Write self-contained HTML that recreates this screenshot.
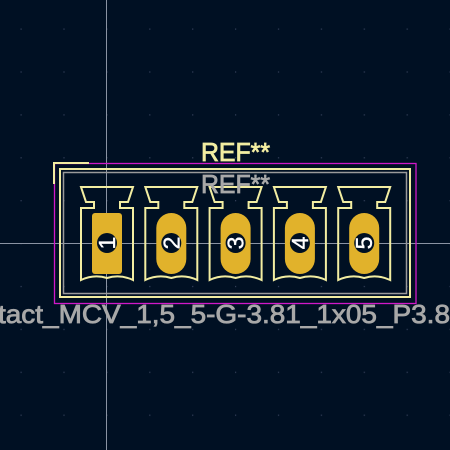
<!DOCTYPE html>
<html><head><meta charset="utf-8"><style>
html,body{margin:0;padding:0;background:#001023;width:450px;height:450px;overflow:hidden}
svg{display:block}
</style></head><body>
<svg width="450" height="450" viewBox="0 0 450 450" xmlns="http://www.w3.org/2000/svg">
<defs>
<pattern id="g" x="0" y="0" width="42.9" height="42.9" patternUnits="userSpaceOnUse" patternTransform="translate(20.5,28.5)">
<rect x="0" y="0" width="1.2" height="1.2" fill="#34405a"/>
</pattern>
<g id="sil">
<path d="M-26,187 L26,187 L21,202 L13,202 L13,208 L26,208 L26,280 Q13,274 0,278 Q-13,274 -26,280 L-26,208 L-13,208 L-13,202 L-21,202 Z" fill="none" stroke="#f2eda1" stroke-width="2" stroke-linejoin="miter"/>
</g>
<g id="pad">
<rect x="-15" y="213" width="30" height="61" rx="15" fill="#e1b22b"/>
<circle cx="0" cy="243" r="10" fill="#001023"/>
</g>
</defs>
<rect width="450" height="450" fill="#001023"/>
<rect width="450" height="450" fill="url(#g)"/>
<line x1="106.5" y1="0" x2="106.5" y2="450" stroke="#8a93a3" stroke-width="1"/>
<line x1="0" y1="243.5" x2="450" y2="243.5" stroke="#8a93a3" stroke-width="1"/>
<rect x="54.5" y="163.5" width="361.5" height="140" fill="none" stroke="#d018c8" stroke-width="1.3"/>
<rect x="60" y="169" width="350" height="128" fill="none" stroke="#f2eda1" stroke-width="2"/>
<rect x="63.5" y="172.5" width="343" height="121" fill="none" stroke="#9a9a9a" stroke-width="1.5"/>
<path d="M54,184 L54,163 L89,163" fill="none" stroke="#f2eda1" stroke-width="2"/>
<g transform="translate(107,0)"><use href="#sil"/><rect x="-15" y="213" width="30" height="61" rx="3" fill="#e1b22b"/><circle cx="0" cy="243" r="10" fill="#001023"/></g>
<g transform="translate(171.3,0)"><use href="#sil"/><use href="#pad"/></g>
<g transform="translate(235.6,0)"><use href="#sil"/><use href="#pad"/></g>
<g transform="translate(299.9,0)"><use href="#sil"/><use href="#pad"/></g>
<g transform="translate(364.2,0)"><use href="#sil"/><use href="#pad"/></g>
<g font-family="Liberation Sans, sans-serif" font-size="23" fill="#ffffff" stroke="#ffffff" stroke-width="0.4" text-anchor="middle">
<text transform="translate(115,243) rotate(-90)">1</text>
<text transform="translate(179.3,243) rotate(-90)">2</text>
<text transform="translate(243.6,243) rotate(-90)">3</text>
<text transform="translate(307.9,243) rotate(-90)">4</text>
<text transform="translate(372.2,243) rotate(-90)">5</text>
</g>
<text x="201" y="161" font-family="Liberation Sans, sans-serif" font-size="26" fill="#f2eda1" stroke="#f2eda1" stroke-width="0.8" textLength="69" lengthAdjust="spacingAndGlyphs">REF**</text>
<text x="201" y="193" font-family="Liberation Sans, sans-serif" font-size="26" fill="#a8a8a8" stroke="#a8a8a8" stroke-width="0.8" textLength="69" lengthAdjust="spacingAndGlyphs">REF**</text>
<text x="-2" y="323" font-family="Liberation Sans, sans-serif" font-size="26" fill="#a8a8a8" stroke="#a8a8a8" stroke-width="0.8" textLength="452" lengthAdjust="spacingAndGlyphs">tact_MCV_1,5_5-G-3.81_1x05_P3.8</text>
</svg>
</body></html>
